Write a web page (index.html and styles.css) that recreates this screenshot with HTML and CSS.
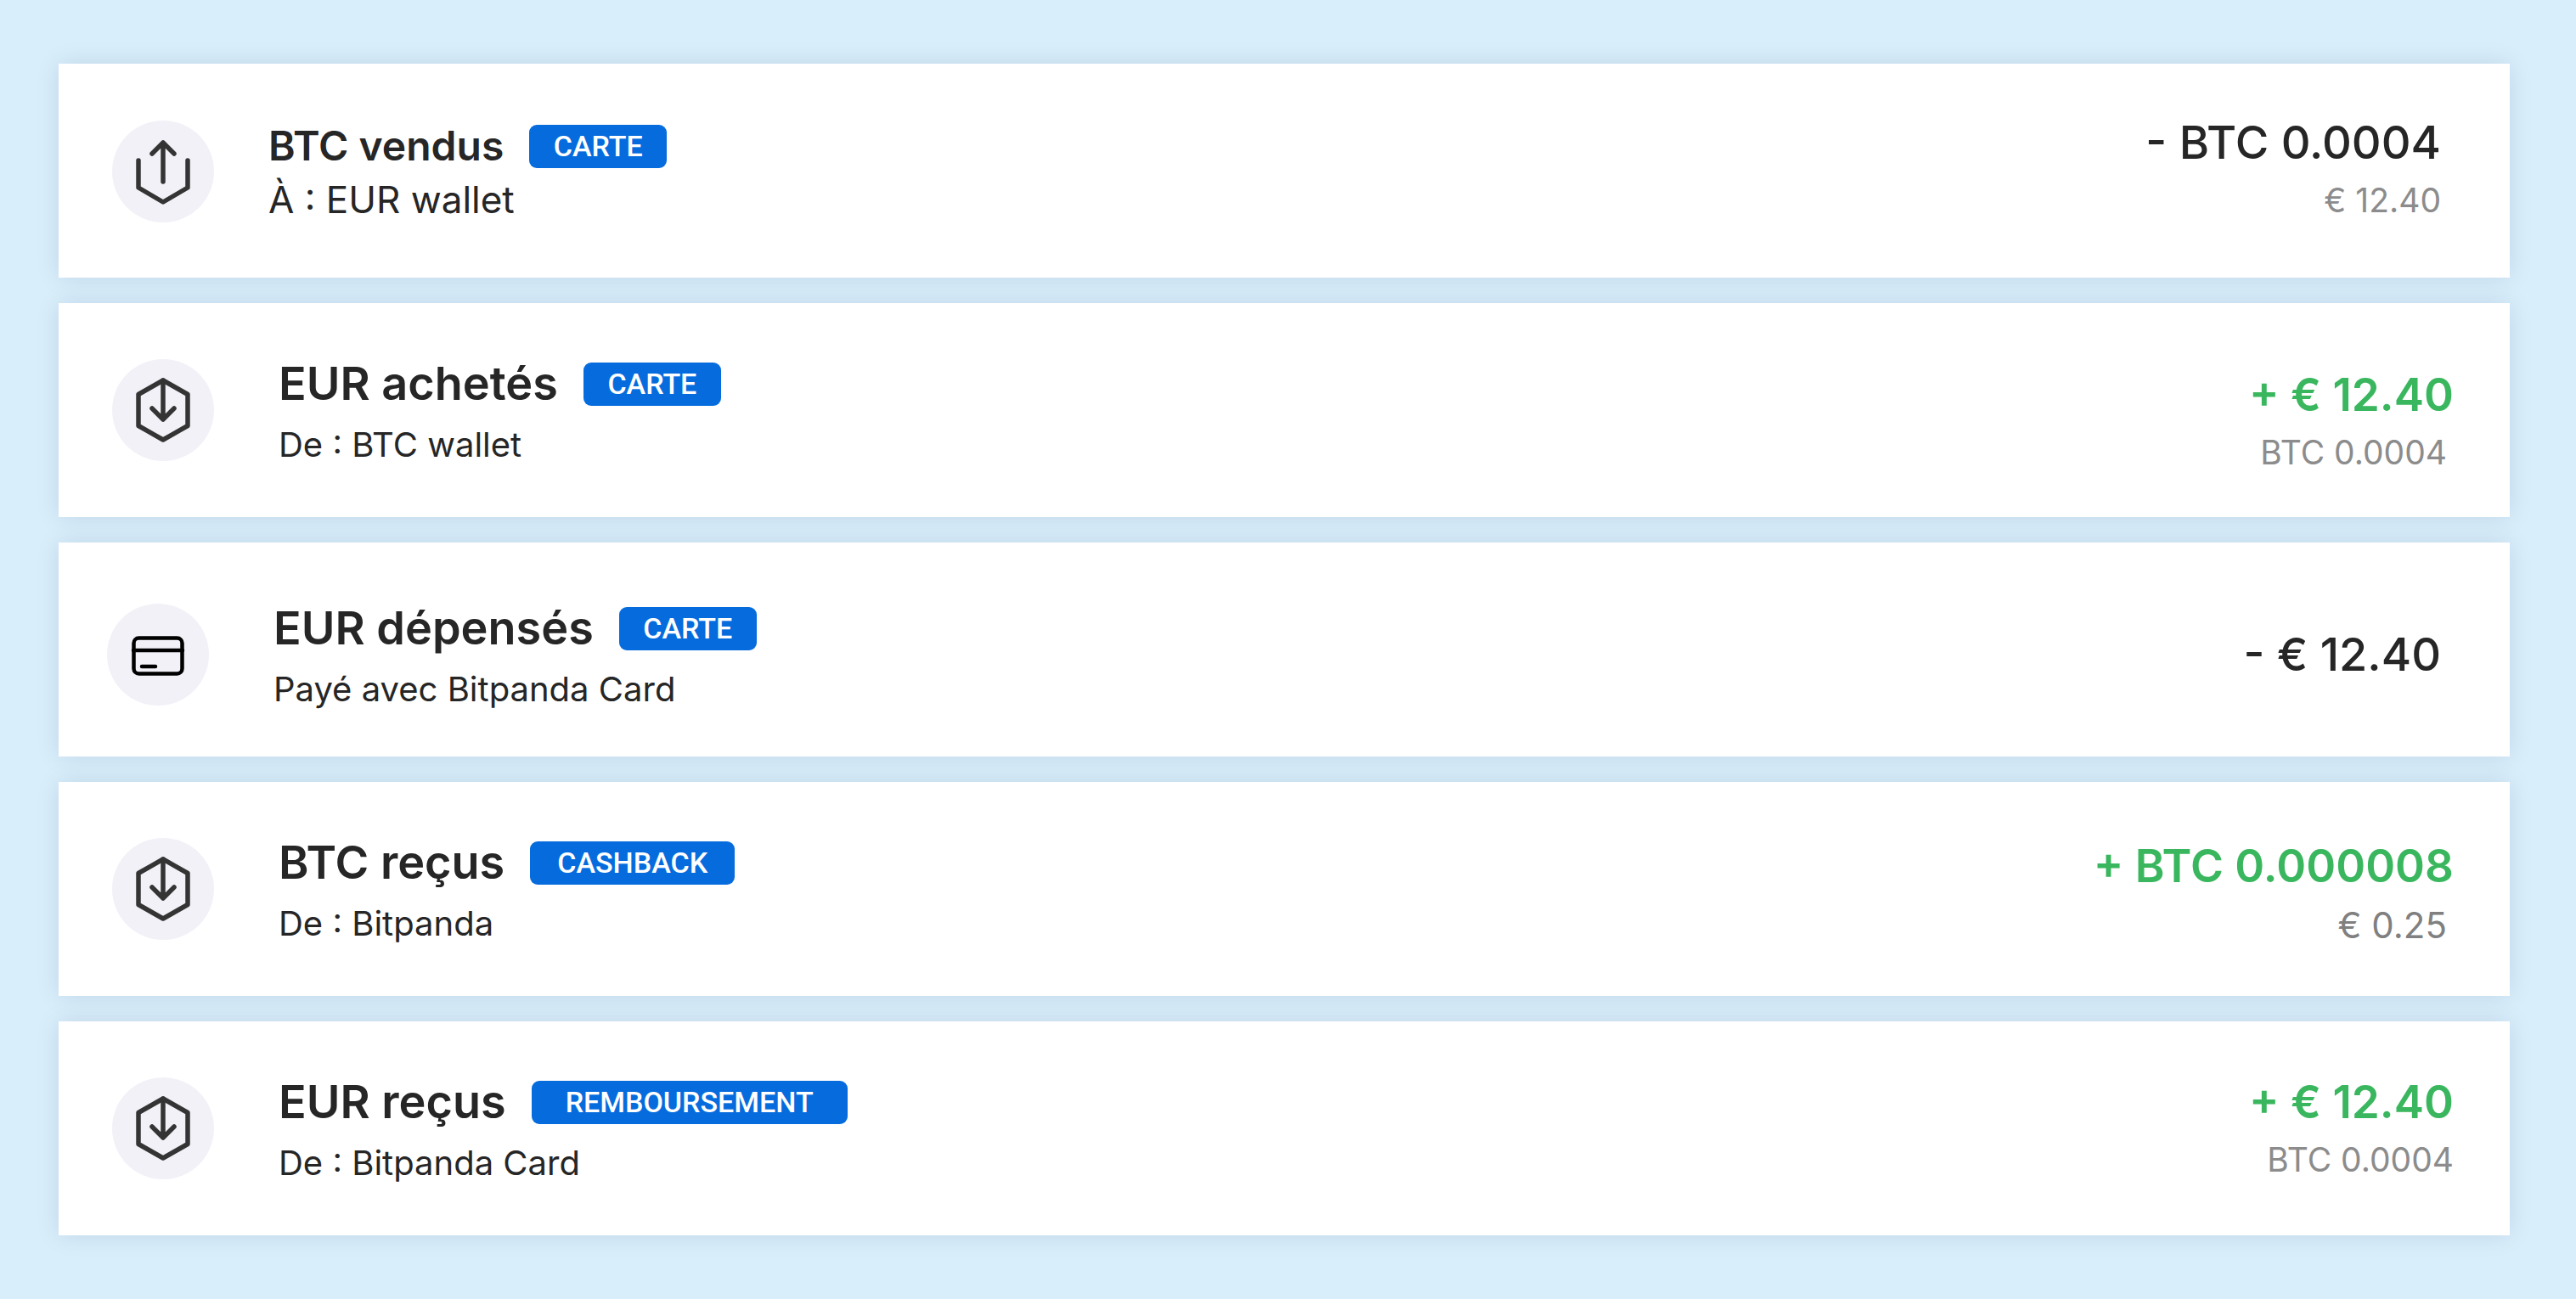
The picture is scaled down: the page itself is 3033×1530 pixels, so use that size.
FILE: index.html
```html
<!DOCTYPE html>
<html lang="fr">
<head>
<meta charset="utf-8">
<meta name="viewport" content="width=device-width, initial-scale=1">
<title>Transactions</title>
<link rel="stylesheet" href="styles.css">
</head>
<body>
<svg class="sprite" aria-hidden="true">
  <symbol id="icon-receive" viewBox="0 0 120 120">
    <path d="M60 25 31 41.500V78.500L60 95 89 78.500V41.500Z"/>
    <path d="M60 25V71M47 58 60 71 73 58"/>
  </symbol>
  <symbol id="icon-send" viewBox="0 0 120 120">
    <path d="M31 47V79L60 96 89 79V47"/>
    <path d="M60 72V26M47 39 60 26 73 39"/>
  </symbol>
  <symbol id="icon-card" viewBox="0 0 120 120">
    <rect x="31.500" y="40.500" width="57" height="42" rx="6"/>
    <path d="M31 55H89M41 74H57"/>
  </symbol>
</svg>
<main>
  <ul class="transactions">
    <li class="card card--compact">
      <span class="icon"><svg class="glyph" aria-hidden="true"><use href="#icon-send"/></svg></span>
      <div class="info">
        <div class="heading"><h2 class="title">BTC vendus</h2><span class="badge">CARTE</span></div>
        <p class="detail">À : EUR wallet</p>
      </div>
      <div class="amounts">
        <p class="amount">- BTC 0.0004</p>
        <p class="value">€ 12.40</p>
      </div>
    </li>
    <li class="card card--low">
      <span class="icon"><svg class="glyph" aria-hidden="true"><use href="#icon-receive"/></svg></span>
      <div class="info">
        <div class="heading"><h2 class="title">EUR achetés</h2><span class="badge">CARTE</span></div>
        <p class="detail">De : BTC wallet</p>
      </div>
      <div class="amounts">
        <p class="amount amount--credit">+ € 12.40</p>
        <p class="value value--inset">BTC 0.0004</p>
      </div>
    </li>
    <li class="card card--spent">
      <span class="icon"><svg class="glyph glyph--card" aria-hidden="true"><use href="#icon-card"/></svg></span>
      <div class="info">
        <div class="heading"><h2 class="title">EUR dépensés</h2><span class="badge">CARTE</span></div>
        <p class="detail">Payé avec Bitpanda Card</p>
      </div>
      <div class="amounts">
        <p class="amount">- € 12.40</p>
      </div>
    </li>
    <li class="card card--cashback">
      <span class="icon"><svg class="glyph" aria-hidden="true"><use href="#icon-receive"/></svg></span>
      <div class="info">
        <div class="heading"><h2 class="title">BTC reçus</h2><span class="badge badge--medium">CASHBACK</span></div>
        <p class="detail">De : Bitpanda</p>
      </div>
      <div class="amounts">
        <p class="amount amount--credit">+ BTC 0.000008</p>
        <p class="value value--inset">€ 0.25</p>
      </div>
    </li>
    <li class="card">
      <span class="icon"><svg class="glyph" aria-hidden="true"><use href="#icon-receive"/></svg></span>
      <div class="info">
        <div class="heading"><h2 class="title">EUR reçus</h2><span class="badge badge--wide">REMBOURSEMENT</span></div>
        <p class="detail">De : Bitpanda Card</p>
      </div>
      <div class="amounts">
        <p class="amount amount--credit">+ € 12.40</p>
        <p class="value">BTC 0.0004</p>
      </div>
    </li>
  </ul>
</main>
</body>
</html>
```
FILE: styles.css
```css
* {
  box-sizing: border-box;
}

body {
  margin: 0;
  background: #d8eefb;
  color: #262626;
  font-family: Inter, "Liberation Sans", sans-serif;
}

h2,
p,
ul {
  margin: 0;
  padding: 0;
}

.sprite {
  display: none;
}

.transactions {
  display: flex;
  flex-direction: column;
  gap: 30px;
  padding: 75px 78px 75px 69px;
  list-style: none;
}

.card {
  display: flex;
  align-items: flex-start;
  gap: 76px;
  min-height: 252px;
  padding: 63px 66px 48px 63px;
  background: #fff;
  box-shadow: 0 0 27px rgba(0, 20, 50, 0.1);
}

.icon {
  flex: none;
  width: 120px;
  height: 120px;
  margin-top: 3px;
  border-radius: 50%;
  background: #f2f1f7;
}

.glyph {
  display: block;
  width: 100%;
  height: 100%;
  fill: none;
  stroke: #343434;
  stroke-width: 5.500;
  stroke-linecap: round;
  stroke-linejoin: round;
}

.glyph--card {
  stroke: #000;
  stroke-width: 4.500;
}

.info {
  display: flex;
  flex: 1;
  flex-direction: column;
  gap: 16px;
}

.heading {
  display: flex;
  align-items: center;
  gap: 30px;
}

.title {
  font-size: 54px;
  font-weight: 600;
  line-height: 64px;
}

.detail {
  font-size: 40px;
  line-height: 48px;
}

.badge {
  min-width: 162px;
  padding: 0 26px;
  border-radius: 9px;
  background: #066cde;
  color: #fff;
  font-family: Roboto, "Liberation Sans", sans-serif;
  font-size: 34px;
  font-weight: 500;
  line-height: 51px;
  text-align: center;
}

.badge--medium {
  padding: 0 32px;
}

.badge--wide {
  padding: 0 40px;
}

.amounts {
  display: flex;
  flex-direction: column;
  gap: 12px;
  text-align: right;
  white-space: nowrap;
}

.amount {
  font-size: 54px;
  font-weight: 500;
  line-height: 64px;
}

.amount--credit {
  color: #3ab75e;
  font-size: 53px;
  font-weight: 600;
}

.value {
  color: #8c8c8c;
  font-size: 39px;
  line-height: 48px;
}

.value--inset {
  padding-right: 8px;
}

.card--compact {
  gap: 64px;
  padding-top: 65px;
  padding-right: 81px;
}

.card--compact .icon {
  margin-top: 2px;
}

.card--compact .info {
  gap: 9px;
}

.card--compact .title {
  font-size: 48px;
}

.card--compact .detail {
  font-size: 44px;
  line-height: 44px;
}

.card--compact .amounts {
  margin-top: -4px;
}

.card--low .amounts {
  padding-top: 13px;
}

.card--spent {
  padding: 69px 81px 51px 57px;
}

.card--spent .amounts {
  padding-top: 31px;
}

.card--cashback .amounts {
  gap: 14px;
  padding-top: 4px;
}

.card--cashback .value {
  color: #808080;
  font-size: 42px;
}
```
